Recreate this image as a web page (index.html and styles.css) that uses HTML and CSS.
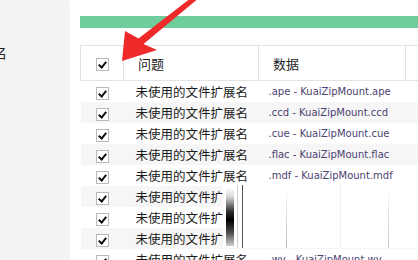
FILE: index.html
```html
<!DOCTYPE html>
<html lang="zh">
<head>
<meta charset="utf-8">
<link rel="stylesheet" href="styles.css">
</head>
<body>
<div class="page">
  <aside class="side"><span class="side-label">名</span></aside>
  <main class="content">
    <div class="bar"></div>
    <table class="grid">
      <colgroup>
        <col class="c-check"><col class="c-issue"><col class="c-data"><col class="c-more">
      </colgroup>
      <thead>
        <tr>
          <th class="cell-check"><span class="box"></span></th>
          <th>问题</th>
          <th>数据</th>
          <th></th>
        </tr>
      </thead>
      <tbody>
        <tr><td class="cell-check"><span class="box"></span></td><td>未使用的文件扩展名</td><td class="data">.ape - KuaiZipMount.ape</td><td>H</td></tr>
        <tr><td class="cell-check"><span class="box"></span></td><td>未使用的文件扩展名</td><td class="data">.ccd - KuaiZipMount.ccd</td><td>H</td></tr>
        <tr><td class="cell-check"><span class="box"></span></td><td>未使用的文件扩展名</td><td class="data">.cue - KuaiZipMount.cue</td><td>H</td></tr>
        <tr><td class="cell-check"><span class="box"></span></td><td>未使用的文件扩展名</td><td class="data">.flac - KuaiZipMount.flac</td><td>H</td></tr>
        <tr><td class="cell-check"><span class="box"></span></td><td>未使用的文件扩展名</td><td class="data">.mdf - KuaiZipMount.mdf</td><td>H</td></tr>
        <tr><td class="cell-check"><span class="box"></span></td><td>未使用的文件扩展名</td><td class="data"></td><td></td></tr>
        <tr><td class="cell-check"><span class="box"></span></td><td>未使用的文件扩展名</td><td class="data"></td><td></td></tr>
        <tr><td class="cell-check"><span class="box"></span></td><td>未使用的文件扩展名</td><td class="data"></td><td></td></tr>
        <tr><td class="cell-check"><span class="box"></span></td><td>未使用的文件扩展名</td><td class="data">.wv - KuaiZipMount.wv</td><td>H</td></tr>
      </tbody>
    </table>
  </main>
  <div class="glitch">
    <span class="g-dark"></span>
    <span class="g-line g1"></span>
    <span class="g-line g2"></span>
    <span class="g-line g3"></span>
    <span class="g-line g4"></span>
    <span class="g-line g5"></span>
  </div>
  <svg class="arrow" width="418" height="260" viewBox="0 0 418 260">
    <polygon fill="#ee2a2a" points="122,61 125,31 138.5,38.5 193.5,-4 196.5,0 143.5,44 157,50"/>
  </svg>
</div>
</body>
</html>
```

FILE: styles.css
```css
html, body {
  margin: 0;
  padding: 0;
  background: #ffffff;
}
.page {
  position: relative;
  width: 418px;
  height: 260px;
  overflow: hidden;
  display: flex;
  font-family: "Noto Sans CJK SC", "Liberation Sans", sans-serif;
}
.side {
  width: 70px;
  flex: 0 0 70px;
  background: #f3f3f3;
  border-top-right-radius: 4px;
  overflow: hidden;
  padding-top: 43px;
  box-sizing: border-box;
}
.side-label {
  display: block;
  margin-left: -7px;
  font-size: 14px;
  line-height: 18px;
  color: #222;
}
.content {
  flex: 1 1 auto;
  padding: 16px 0 0 10px;
  min-width: 0;
}
.bar {
  height: 12px;
  background: #6fcd9c;
  margin-bottom: 17px;
  width: 400px;
}
.grid {
  border-collapse: collapse;
  table-layout: fixed;
  width: 440px;
}
.c-check { width: 43px; }
.c-issue { width: 135px; }
.c-data { width: 147px; }
.c-more { width: 115px; }
.grid th {
  height: 34px;
  padding: 0 0 0 14px;
  border: 1px solid #e3e3e3;
  text-align: left;
  font-weight: normal;
  font-size: 13px;
  color: #222;
  vertical-align: middle;
}
.grid td {
  height: 21px;
  padding: 0 0 0 12px;
  font-size: 12.5px;
  color: #1a1a1a;
  white-space: nowrap;
  overflow: hidden;
  vertical-align: middle;
  line-height: 21px;
}
.grid tbody tr:nth-child(even) td {
  background: #f6f6f6;
}
.grid td.data {
  font-family: "DejaVu Sans", sans-serif;
  font-size: 10px;
  color: #4a4270;
  padding-left: 10px;
}
.grid .cell-check {
  padding: 0;
  text-align: center;
}
.box {
  position: relative;
  display: inline-block;
  width: 11px;
  height: 11px;
  border: 1px solid #b9b9b9;
  background: #fff;
  vertical-align: middle;
}
.box::after {
  content: "";
  position: absolute;
  left: 3.5px;
  top: 1px;
  width: 3px;
  height: 6px;
  border-right: 2px solid #111;
  border-bottom: 2px solid #111;
  transform: rotate(40deg);
}
.glitch {
  position: absolute;
  left: 223px;
  top: 185px;
  width: 195px;
  height: 63px;
  background: #ffffff;
}
.g-dark {
  position: absolute;
  left: 3px;
  top: 3px;
  width: 8px;
  height: 58px;
  background: linear-gradient(to bottom, #ffffff 0%, #d8d8d8 15%, #303030 40%, #000 55%, #444 75%, #cfcfcf 100%);
}
.g-line {
  position: absolute;
  top: 0;
  width: 1px;
  height: 63px;
  background: #c8c8c8;
}
.g1 { left: 14px; background: #d0d0d0; }
.g2 { left: 19px; background: #555; }
.g3 { left: 63px; background: linear-gradient(to bottom, #fff, #d6d6d6 60%, #bbb); }
.g4 { left: 165px; background: linear-gradient(to bottom, #fff, #e0e0e0 50%, #c4c4c4); }
.g5 { left: 117px; background: #f0f0f0; }
.arrow {
  position: absolute;
  left: 0;
  top: 0;
  pointer-events: none;
}
```
